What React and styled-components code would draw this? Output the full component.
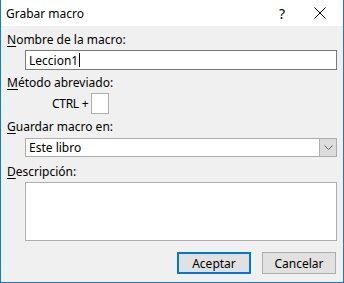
import React from "react";
import styled, { createGlobalStyle } from "styled-components";

const GlobalStyle = createGlobalStyle`
  html, body {
    margin: 0;
    padding: 0;
    background: #f0f0f0;
  }
  * {
    box-sizing: border-box;
  }
`;

const Window = styled.div`
  width: 344px;
  height: 283px;
  border: 1px solid #1979ca;
  border-top: none;
  background: #f0f0f0;
  font-family: "Noto Sans", "Open Sans", sans-serif;
  font-size: 12px;
  color: #000;
  display: flex;
  flex-direction: column;
  overflow: hidden;
`;

const TitleBar = styled.div`
  height: 26px;
  background: #fff;
  display: flex;
  align-items: center;
  padding-left: 5px;
  flex-shrink: 0;
`;

const Title = styled.div`
  flex: 1;
  font-size: 12px;
  color: #000;
`;

const TitleButton = styled.div`
  width: ${(p) => p.$w}px;
  height: 26px;
  display: flex;
  align-items: center;
  justify-content: center;
  font-size: 14px;
  color: #000;
`;

const Body = styled.div`
  flex: 1;
  display: flex;
  flex-direction: column;
  padding: 6px 6px 0 6px;
`;

const Label = styled.div`
  height: 16px;
  line-height: 16px;
  margin-top: ${(p) => p.$mt || 0}px;
`;

const Key = styled.span`
  text-decoration: underline;
  text-underline-offset: 2px;
`;

const Field = styled.div`
  margin-left: 18px;
  width: 312px;
  height: ${(p) => p.$h}px;
  margin-top: ${(p) => p.$mt || 0}px;
  background: #fff;
  border: 1px solid #7a7a7a;
  display: flex;
  align-items: center;
  padding-left: 3px;
`;

const Caret = styled.span`
  display: inline-block;
  width: 1px;
  height: 14px;
  background: #000;
  margin-left: 1px;
`;

const ShortcutRow = styled.div`
  display: flex;
  align-items: center;
  margin-top: 2px;
  padding-left: 45px;
  gap: 3px;
  height: 21px;
`;

const CtrlText = styled.span`
  letter-spacing: -0.3px;
`;

const KeyBox = styled.div`
  width: 18px;
  height: 21px;
  background: #fff;
  border: 1px solid #adadad;
`;

const Select = styled(Field)`
  padding-right: 0;
  border-color: #adadad;
`;

const SelectText = styled.div`
  flex: 1;
`;

const DropButton = styled.div`
  width: 17px;
  height: 100%;
  background: #dcdcdc;
  border-left: 1px solid #adadad;
  display: flex;
  align-items: center;
  justify-content: center;
`;

const TextArea = styled(Field)`
  border-color: #adadad;
`;

const Buttons = styled.div`
  display: flex;
  justify-content: flex-end;
  gap: 11px;
  margin-top: 11px;
  padding-right: 1px;
`;

const Button = styled.div`
  width: 74px;
  height: 22px;
  background: #e1e1e1;
  border: ${(p) => (p.$primary ? "2px solid #0078d7" : "1px solid #adadad")};
  display: flex;
  align-items: center;
  justify-content: center;
`;

export default function App() {
  return (
    <>
      <GlobalStyle />
      <Window>
        <TitleBar>
          <Title>Grabar macro</Title>
          <TitleButton $w={30}>?</TitleButton>
          <TitleButton $w={46}>
            <svg width="12" height="12" viewBox="0 0 12 12">
              <path d="M0.5 0.5 L11.5 11.5 M11.5 0.5 L0.5 11.5" stroke="#000" strokeWidth="1" />
            </svg>
          </TitleButton>
        </TitleBar>
        <Body>
          <Label>
            <Key>N</Key>ombre de la macro:
          </Label>
          <Field $h={20} $mt={2}>
            Leccion1
            <Caret />
          </Field>
          <Label $mt={5}>
            <Key>M</Key>étodo abreviado:
          </Label>
          <ShortcutRow>
            <CtrlText>CTRL +</CtrlText>
            <KeyBox />
          </ShortcutRow>
          <Label $mt={5}>
            <Key>G</Key>uardar macro en:
          </Label>
          <Select $h={19} $mt={3}>
            <SelectText>Este libro</SelectText>
            <DropButton>
              <svg width="9" height="5" viewBox="0 0 9 5">
                <path d="M0.5 0.5 L4.5 4.5 L8.5 0.5" stroke="#606060" fill="none" strokeWidth="1" />
              </svg>
            </DropButton>
          </Select>
          <Label $mt={7}>
            <Key>D</Key>escripción:
          </Label>
          <TextArea $h={59} $mt={2} />
          <Buttons>
            <Button $primary>Aceptar</Button>
            <Button>Cancelar</Button>
          </Buttons>
        </Body>
      </Window>
    </>
  );
}
